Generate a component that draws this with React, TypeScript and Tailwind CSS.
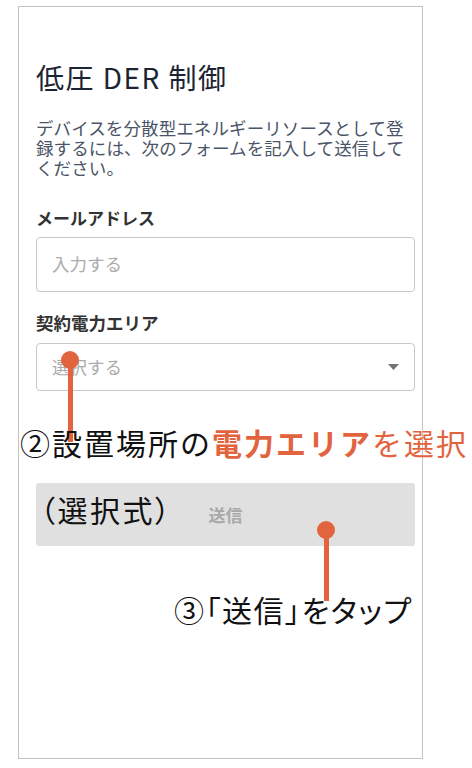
const ORANGE = "bg-[#e2643f]";

// Dot with a stem hanging below it, used for the tutorial callouts
function Pin({ stem }: { stem: string }) {
  return (
    <div className="flex flex-col items-center w-[18px]">
      <div className={`w-[18px] h-[18px] rounded-full ${ORANGE}`} />
      <div className={`-mt-[9px] w-[5px] ${stem} ${ORANGE}`} />
    </div>
  );
}

export default function App() {
  return (
    <div className="relative w-[472px] h-[768px] bg-white font-['Noto_Sans_CJK_JP','Noto_Sans',sans-serif] overflow-hidden">
      {/* Phone screen frame */}
      <div className="ml-[18px] mt-[6px] w-[405px] h-[753px] border border-[#c2c2c2] pl-[17px] pr-[7px] pt-[56px]">
        <h1 className="text-[28px] leading-[28px] tracking-[1.5px] text-[#1c2433] font-normal">低圧 DER 制御</h1>
        <p className="mt-[27px] text-[17.5px] leading-[20px] tracking-[0.1px] text-[#4b5568]">
          デバイスを分散型エネルギーリソースとして登録するには、次のフォームを記入して送信してください。
        </p>

        <label className="block mt-[30px] text-[17px] leading-[20px] font-bold text-[#333]">メールアドレス</label>
        <div className="mt-[9px] h-[55px] rounded-[4px] border border-[#c8c8c8] pl-[15px] flex items-center text-[17.5px] text-[#ababab]">
          入力する
        </div>

        <label className="block mt-[21px] text-[17.5px] leading-[20px] font-bold text-[#333]">契約電力エリア</label>
        <div className="mt-[10px] h-[48px] rounded-[4px] border border-[#c8c8c8] pl-[15px] pr-[15px] flex items-center justify-between text-[17.5px] text-[#ababab]">
          <span>選択する</span>
          <svg width="11" height="6" viewBox="0 0 11 6">
            <polygon points="0,0 11,0 5.5,6" fill="#737373" />
          </svg>
        </div>

        <button className="mt-[92px] w-full h-[63px] rounded-[3px] bg-[#e0e0e0] text-[17px] font-semibold text-[#a8a8a8]">
          送信
        </button>
      </div>

      {/* Callout: step 2 */}
      <div className="absolute left-[61px] top-[351px]">
        <Pin stem="h-[82px]" />
      </div>
      <div className="absolute left-[20px] top-[427px] text-[30px] leading-[30px] text-[#111] whitespace-nowrap">
        <div className="tracking-[2px]">
          ②設置場所の<span className="font-bold text-[#e2643f]">電力エリア</span>
          <span className="text-[#e2643f]">を選択</span>
        </div>
        <div className="mt-[37px] ml-[20px] tracking-[2.5px] [font-feature-settings:'palt']">（選択式）</div>
      </div>

      {/* Callout: step 3 */}
      <div className="absolute left-[317px] top-[521px]">
        <Pin stem="h-[71px]" />
      </div>
      <div className="absolute left-[174px] top-[594px] text-[30px] leading-[30px] tracking-[1.5px] text-[#111] whitespace-nowrap [font-feature-settings:'palt']">
        ③「送信」をタップ
      </div>
    </div>
  );
}
